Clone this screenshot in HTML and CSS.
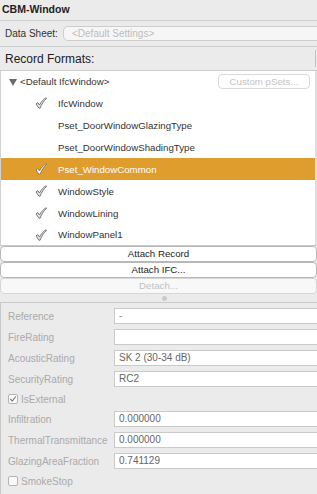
FILE: index.html
```html
<!DOCTYPE html>
<html>
<head>
<meta charset="utf-8">
<title>CBM-Window</title>
<link rel="stylesheet" href="styles.css">
</head>
<body>
<div class="app">
  <div class="title">CBM-Window</div>

  <div class="sheet-row">
    <span class="sheet-label">Data Sheet:</span>
    <div class="sheet-field">&lt;Default Settings&gt;</div>
  </div>

  <div class="rf-header">
    <span class="rf-title">Record Formats:</span>
    <span class="rf-divider"></span>
  </div>

  <div class="list">
    <div class="row root">
      <span class="tri"></span>
      <span class="name">&lt;Default IfcWindow&gt;</span>
      <button class="pset-btn" disabled>Custom pSets...</button>
    </div>
    <div class="row">
      <svg class="check" viewBox="0 0 12 12"><path d="M1 6.9 L2.9 5.6 L4.5 8 C6 5 8.3 2.4 11.1 0.7 L11.5 1.5 C8.9 3.6 6.7 7 5.1 11.2 L3.9 11.2 Z"/></svg>
      <span class="name">IfcWindow</span>
    </div>
    <div class="row">
      <span class="check-space"></span>
      <span class="name">Pset_DoorWindowGlazingType</span>
    </div>
    <div class="row">
      <span class="check-space"></span>
      <span class="name">Pset_DoorWindowShadingType</span>
    </div>
    <div class="row sel">
      <svg class="check" viewBox="0 0 12 12"><path d="M1 6.9 L2.9 5.6 L4.5 8 C6 5 8.3 2.4 11.1 0.7 L11.5 1.5 C8.9 3.6 6.7 7 5.1 11.2 L3.9 11.2 Z"/></svg>
      <span class="name">Pset_WindowCommon</span>
    </div>
    <div class="row">
      <svg class="check" viewBox="0 0 12 12"><path d="M1 6.9 L2.9 5.6 L4.5 8 C6 5 8.3 2.4 11.1 0.7 L11.5 1.5 C8.9 3.6 6.7 7 5.1 11.2 L3.9 11.2 Z"/></svg>
      <span class="name">WindowStyle</span>
    </div>
    <div class="row">
      <svg class="check" viewBox="0 0 12 12"><path d="M1 6.9 L2.9 5.6 L4.5 8 C6 5 8.3 2.4 11.1 0.7 L11.5 1.5 C8.9 3.6 6.7 7 5.1 11.2 L3.9 11.2 Z"/></svg>
      <span class="name">WindowLining</span>
    </div>
    <div class="row last">
      <svg class="check" viewBox="0 0 12 12"><path d="M1 6.9 L2.9 5.6 L4.5 8 C6 5 8.3 2.4 11.1 0.7 L11.5 1.5 C8.9 3.6 6.7 7 5.1 11.2 L3.9 11.2 Z"/></svg>
      <span class="name">WindowPanel1</span>
    </div>
  </div>

  <div class="buttons">
    <button class="btn">Attach Record</button>
    <button class="btn">Attach IFC...</button>
    <button class="btn disabled" disabled>Detach...</button>
  </div>

  <div class="splitter"><span class="dot"></span></div>

  <div class="props">
    <div class="prop">
      <span class="prop-label">Reference</span>
      <div class="prop-field light">-</div>
    </div>
    <div class="prop">
      <span class="prop-label">FireRating</span>
      <div class="prop-field"></div>
    </div>
    <div class="prop">
      <span class="prop-label">AcousticRating</span>
      <div class="prop-field">SK 2 (30-34 dB)</div>
    </div>
    <div class="prop">
      <span class="prop-label">SecurityRating</span>
      <div class="prop-field">RC2</div>
    </div>
    <div class="check-row">
      <span class="cb"><svg viewBox="0 0 10 10"><path d="M2 5.2 L4 7.6 L8.2 2.2"/></svg></span>
      <span>IsExternal</span>
    </div>
    <div class="prop">
      <span class="prop-label">Infiltration</span>
      <div class="prop-field">0.000000</div>
    </div>
    <div class="prop">
      <span class="prop-label">ThermalTransmittance</span>
      <div class="prop-field">0.000000</div>
    </div>
    <div class="prop">
      <span class="prop-label">GlazingAreaFraction</span>
      <div class="prop-field">0.741129</div>
    </div>
    <div class="check-row">
      <span class="cb"></span>
      <span>SmokeStop</span>
    </div>
  </div>
</div>
</body>
</html>
```

FILE: styles.css
```css
html, body {
  margin: 0;
  padding: 0;
}

body {
  width: 317px;
  height: 494px;
  overflow: hidden;
  background: #ebebeb;
  font-family: "Liberation Sans", Arial, sans-serif;
}

.app {
  width: 317px;
  height: 494px;
  display: flex;
  flex-direction: column;
}

.title {
  height: 20px;
  line-height: 19px;
  padding-left: 2px;
  font-weight: bold;
  font-size: 10.5px;
  color: #222;
  border-bottom: 1px solid #d0d0d0;
  flex: none;
}

.sheet-row {
  height: 25px;
  display: flex;
  align-items: center;
  padding-left: 5px;
  flex: none;
}

.sheet-label {
  width: 58px;
  font-size: 10px;
  color: #333;
}

.sheet-field {
  flex: 1;
  height: 15px;
  box-sizing: border-box;
  border: 1px solid #cdcdcd;
  border-radius: 5px;
  background: #f6f6f6;
  margin-right: -8px;
  padding-left: 8px;
  font-size: 10px;
  line-height: 13px;
  color: #bdbdbd;
}

.rf-header {
  height: 23px;
  border-top: 1px solid #cdcdcd;
  border-bottom: 1px solid #cdcdcd;
  display: flex;
  align-items: center;
  padding-left: 5px;
  flex: none;
}

.rf-title {
  flex: 1;
  font-size: 12px;
  color: #222;
}

.rf-divider {
  width: 1px;
  height: 17px;
  background: #c2c2c2;
  margin-right: 1px;
}

.list {
  background: #fff;
  border-left: 1px solid #d2d2d2;
  border-right: 2px solid #dedede;
  border-bottom: 1px solid #c8c8c8;
  flex: none;
}

.row {
  height: 22px;
  display: flex;
  align-items: center;
  padding-left: 34px;
  font-size: 9.7px;
  color: #333;
}

.row.root {
  height: 21px;
  padding-left: 8px;
}

.row.last {
  height: 21px;
}

.row.sel {
  background: #df9d2e;
  color: #fff;
}

.check {
  width: 12px;
  height: 12px;
  margin-right: 11px;
  display: block;
  flex: none;
}

.check path {
  fill: #e4e4e4;
  stroke: #5a5a5a;
  stroke-width: 0.8;
  stroke-linejoin: round;
}

.row.sel .check path {
  fill: #fff;
  stroke: #7a6a50;
}

.check-space {
  width: 12px;
  margin-right: 11px;
  flex: none;
}

.tri {
  width: 0;
  height: 0;
  border-left: 4px solid transparent;
  border-right: 4px solid transparent;
  border-top: 7px solid #6c6c6c;
  margin-right: 3px;
  margin-top: 1px;
}

.pset-btn {
  margin-left: auto;
  margin-right: 5px;
  width: 92px;
  height: 15px;
  box-sizing: border-box;
  border: 1px solid #d9d9d9;
  border-radius: 4px;
  background: #fff;
  padding: 0;
  font-family: "Liberation Sans", Arial, sans-serif;
  font-size: 9.7px;
  color: #c4c4c4;
  line-height: 13px;
}

.buttons {
  display: flex;
  flex-direction: column;
  flex: none;
}

.btn {
  display: block;
  width: 100%;
  height: 16px;
  box-sizing: border-box;
  border: 1px solid #b8b8b8;
  border-radius: 4px;
  background: #fff;
  padding: 0;
  font-family: "Liberation Sans", Arial, sans-serif;
  font-size: 9.7px;
  line-height: 14px;
  color: #222;
}

.btn.disabled {
  color: #c2c2c2;
  border-color: #d6d6d6;
  background: #f8f8f8;
}

.splitter {
  height: 8px;
  display: flex;
  align-items: center;
  padding-left: 162px;
  flex: none;
}

.dot {
  width: 5px;
  height: 5px;
  border-radius: 50%;
  background: #cacaca;
}

.props {
  flex: 1;
  border-top: 1px solid #c8c8c8;
  border-left: 1px solid #c8c8c8;
  padding: 5px 0 0 7px;
  display: flex;
  flex-direction: column;
  gap: 5px;
}

.prop {
  height: 16px;
  display: flex;
  align-items: center;
}

.prop-label {
  width: 106px;
  font-size: 10px;
  color: #aaaaaa;
  flex: none;
}

.prop-field {
  flex: 1;
  height: 16px;
  box-sizing: border-box;
  border: 1px solid #cacaca;
  background: #fff;
  margin-right: -4px;
  padding-left: 4px;
  font-size: 10px;
  line-height: 14px;
  color: #666;
}

.prop-field.light {
  color: #8a8a8a;
}

.check-row {
  height: 14px;
  display: flex;
  align-items: center;
  font-size: 10px;
  color: #aaaaaa;
}

.cb {
  width: 10px;
  height: 10px;
  box-sizing: border-box;
  border: 1px solid #b4b4b4;
  border-radius: 2px;
  background: #fafafa;
  margin-right: 3px;
  display: flex;
}

.cb svg {
  width: 8px;
  height: 8px;
}

.cb path {
  fill: none;
  stroke: #7a7a7a;
  stroke-width: 1.4;
  stroke-linecap: round;
  stroke-linejoin: round;
}
```
